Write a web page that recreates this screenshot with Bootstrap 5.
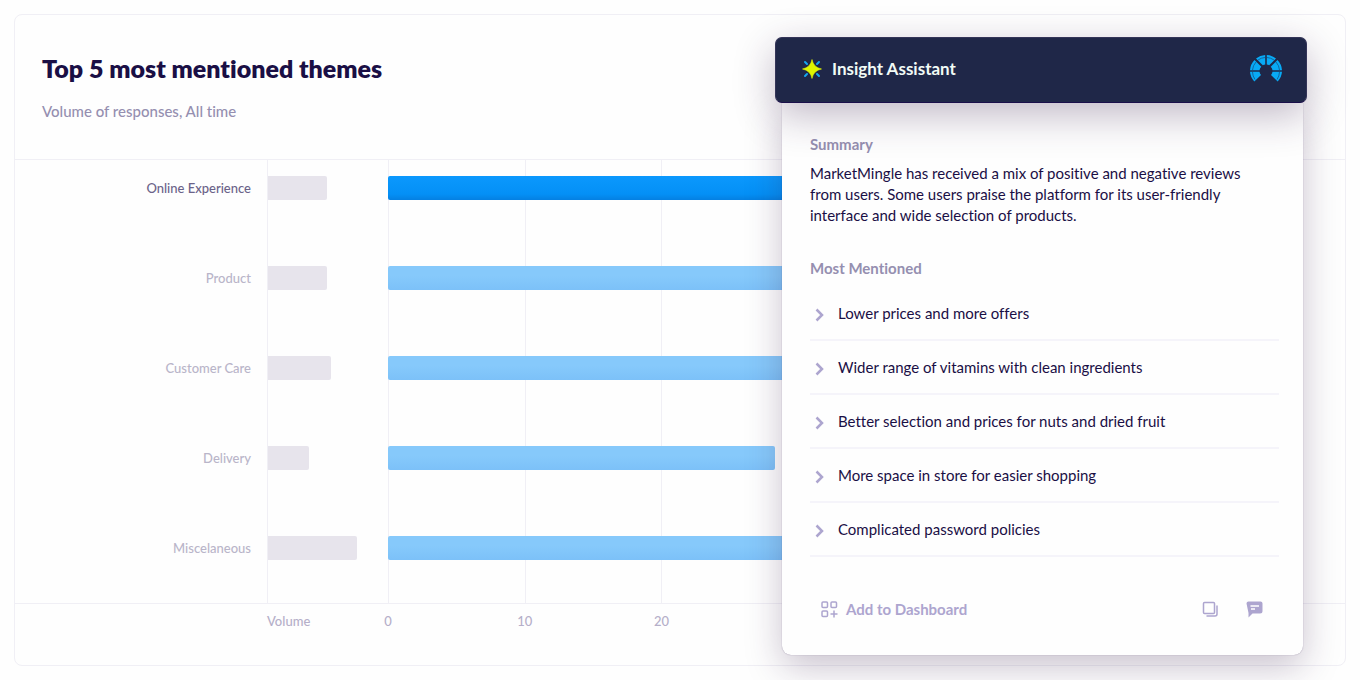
<!DOCTYPE html>
<html lang="en">
<head>
<meta charset="utf-8">
<meta name="viewport" content="width=device-width, initial-scale=1">
<title>Top 5 most mentioned themes</title>
<link href="https://cdn.jsdelivr.net/npm/bootstrap@5.3.0/dist/css/bootstrap.min.css" rel="stylesheet">
<style>
:root { --ink: #1a0f45; --muted-ink: #958fb0; --soft: #ada5cf; --rule: #f0eff5; }
body { font-family: Lato, "Liberation Sans", sans-serif; color: var(--ink); background: #fefefe; font-size: 15px; line-height: 21px; }
body, button { font-variant-ligatures: none; }
.board { padding: 14px; }
.theme-card { --bs-card-border-color: #f0eff5; --bs-card-border-radius: 8px; --bs-card-bg: #fefefe; --bs-card-color: var(--ink); }
.theme-head { padding: 36px 27px 37px; border-bottom: 1px solid var(--rule); }
.theme-head h1 { font-size: 25px; line-height: 34px; font-weight: 800; margin-bottom: 16px; }
.theme-head p { font-weight: 500; color: var(--muted-ink); }
.chart-row { display: grid; grid-template-columns: 252px 121px 1fr; height: 90px; }
.chart-row:last-child { height: 83px; }
.chart-row > div { padding-top: 16px; }
.name-cell { padding-right: 16px; text-align: right; font-size: 13px; line-height: 24px; font-weight: 500; color: #b9b5c9; }
.active-row .name-cell { color: #6b6389; }
.vol-cell { border-left: 1px solid var(--rule); }
.plot-cell { background: repeating-linear-gradient(90deg, #f0eff5 0 1px, transparent 1px calc(100% / 7)); }
.vol-bar, .count-bar { height: 24px; border-radius: 0 2px 2px 0; }
.vol-bar { background: #e7e4ec; }
.count-bar { background: linear-gradient(#86c9fb 40%, #7cc1f8); border-radius: 2px; }
.active-row .count-bar { background: linear-gradient(#0b98fd, #0490f6 75%, #0480e2); }
.axis { display: grid; grid-template-columns: 252px 121px repeat(7, 1fr); padding: 7px 0 33px; border-top: 1px solid var(--rule); font-size: 13px; font-weight: 500; color: #b5afc9; }
.axis .tick { transform: translateX(-50%); width: 30px; text-align: center; }
.assistant { position: absolute; top: 37px; right: 53px; width: 532px; }
.assistant-head { position: relative; height: 66px; gap: 9px; padding: 0 23px 2px 25px; border-radius: 7px; background: #1f2748; color: #f2fbf6; border: 1px solid #343458; border-bottom-color: #1a0f4a; box-shadow: 0 12px 40px rgba(50, 22, 70, .3); z-index: 1; }
.assistant-head h2 { font-size: 17px; line-height: 24px; font-weight: 700; }
.assistant-body { margin: 0 4px 0 7px; padding: 31px 24px 33px 28px; background: #fefefe; border-radius: 0 0 9px 9px; box-shadow: 0 0 1px rgba(50, 30, 80, .5), 0 12px 36px rgba(50, 22, 70, .26); }
.assistant-body h3 { font-size: 15px; line-height: 21px; font-weight: 700; color: var(--muted-ink); }
.assistant-body p { padding-right: 28px; }
.mention { min-height: 54px; padding: 0; border: 0; border-bottom: 2px solid #f5f4fa; background: none; color: var(--ink); text-align: left; }
.mention svg { margin: 3px 14px 0 5px; }
.assistant-tools { margin-top: 40px; padding: 0 16px 1px 11px; gap: 27px; }
.tool { padding: 0; border: 0; background: none; color: var(--soft); font-weight: 700; line-height: 24px; }
</style>
</head>
<body>
<main class="board position-relative">
  <section class="card theme-card">
    <header class="theme-head">
      <h1>Top 5 most mentioned themes</h1>
      <p class="mb-0">Volume of responses, All time</p>
    </header>
    <div>
      <div class="chart-row active-row"><div class="name-cell">Online Experience</div><div class="vol-cell"><div class="vol-bar" style="width:59px"></div></div><div class="plot-cell"><div class="count-bar" style="width:86%"></div></div></div>
      <div class="chart-row"><div class="name-cell">Product</div><div class="vol-cell"><div class="vol-bar" style="width:59px"></div></div><div class="plot-cell"><div class="count-bar" style="width:74%"></div></div></div>
      <div class="chart-row"><div class="name-cell">Customer Care</div><div class="vol-cell"><div class="vol-bar" style="width:63px"></div></div><div class="plot-cell"><div class="count-bar" style="width:62%"></div></div></div>
      <div class="chart-row"><div class="name-cell">Delivery</div><div class="vol-cell"><div class="vol-bar" style="width:41px"></div></div><div class="plot-cell"><div class="count-bar" style="width:40.4%"></div></div></div>
      <div class="chart-row"><div class="name-cell">Miscelaneous</div><div class="vol-cell"><div class="vol-bar" style="width:89px"></div></div><div class="plot-cell"><div class="count-bar" style="width:50%"></div></div></div>
    </div>
    <div class="axis">
      <span></span><span>Volume</span>
      <span class="tick">0</span><span class="tick">10</span><span class="tick">20</span>
    </div>
  </section>

  <aside class="assistant">
    <header class="assistant-head d-flex align-items-center">
      <svg width="22" height="22" viewBox="0 0 22 22" aria-hidden="true">
        <path d="M4 4l2 2M18 4l-2 2M4 18l2-2M18 18l-2-2" stroke="#16a6ef" stroke-width="2" stroke-linecap="round"/>
        <path d="M11 1.500Q12.500 9.500 20.500 11Q12.500 12.500 11 20.500Q9.500 12.500 1.500 11Q9.500 9.500 11 1.500Z" fill="#dff500" stroke="#dff500" stroke-width=".6" stroke-linejoin="round"/>
      </svg>
      <h2 class="mb-0">Insight Assistant</h2>
      <svg class="ms-auto" width="34" height="30" viewBox="0 0 34 30" aria-hidden="true">
        <g fill="#08aaf5">
          <path d="M16.200 1A16 16 0 0 0 7 4.500L13.800 11.300A6 6 0 0 1 16.200 10.500Z"/>
          <path d="M5.500 6A16 16 0 0 0 1 16.200H10.500A6 6 0 0 1 12.300 12.800Z"/>
          <path d="M1 17.800A16 16 0 0 0 5.300 27.500L12 21A6 6 0 0 1 10.500 17.800Z"/>
          <path d="M17.800 1A16 16 0 0 1 27 4.500L20.200 11.300A6 6 0 0 0 17.800 10.500Z"/>
          <path d="M28.500 6A16 16 0 0 1 33 16.200H23.500A6 6 0 0 0 21.700 12.800Z"/>
          <path d="M33 17.800A16 16 0 0 1 28.700 27.500L22 21A6 6 0 0 0 23.500 17.800Z"/>
        </g>
        <path d="M6 25.500A13.500 13.500 0 0 1 3.500 18M3.500 16A13.500 13.500 0 0 1 7 8M9 6A13.500 13.500 0 0 1 16 3.500M18 3.500A13.500 13.500 0 0 1 25 6M27 8A13.500 13.500 0 0 1 30.500 16M30.500 18A13.500 13.500 0 0 1 28 25.500" fill="none" stroke="#14558a" stroke-width=".8"/>
      </svg>
    </header>
    <div class="assistant-body">
      <h3 class="mb-2">Summary</h3>
      <p>MarketMingle has received a mix of positive and negative reviews from users. Some users praise the platform for its user-friendly interface and wide selection of products.</p>
      <h3 class="mt-4 pt-2">Most Mentioned</h3>
      <div class="d-flex flex-column">
        <button type="button" class="mention d-flex align-items-center"><svg width="9" height="14" viewBox="0 0 9 14" fill="none" stroke="#ada5cf" stroke-width="2.5"><path d="M1.500 1.500L7 7l-5.500 5.500"/></svg>Lower prices and more offers</button>
        <button type="button" class="mention d-flex align-items-center"><svg width="9" height="14" viewBox="0 0 9 14" fill="none" stroke="#ada5cf" stroke-width="2.5"><path d="M1.500 1.500L7 7l-5.500 5.500"/></svg>Wider range of vitamins with clean ingredients</button>
        <button type="button" class="mention d-flex align-items-center"><svg width="9" height="14" viewBox="0 0 9 14" fill="none" stroke="#ada5cf" stroke-width="2.5"><path d="M1.500 1.500L7 7l-5.500 5.500"/></svg>Better selection and prices for nuts and dried fruit</button>
        <button type="button" class="mention d-flex align-items-center"><svg width="9" height="14" viewBox="0 0 9 14" fill="none" stroke="#ada5cf" stroke-width="2.5"><path d="M1.500 1.500L7 7l-5.500 5.500"/></svg>More space in store for easier shopping</button>
        <button type="button" class="mention d-flex align-items-center"><svg width="9" height="14" viewBox="0 0 9 14" fill="none" stroke="#ada5cf" stroke-width="2.5"><path d="M1.500 1.500L7 7l-5.500 5.500"/></svg>Complicated password policies</button>
      </div>
      <footer class="assistant-tools d-flex align-items-center">
        <button type="button" class="tool d-flex align-items-center gap-2 me-auto">
          <svg width="17" height="17" viewBox="0 0 17 17" fill="none" stroke="currentColor" stroke-width="1.500"><rect x="1" y="1" width="5.500" height="5.500" rx="1"/><rect x="10" y="1" width="5.500" height="5.500" rx="1"/><rect x="1" y="10" width="5.500" height="5.500" rx="1"/><path d="M13 9.500v7M9.500 13h7"/></svg>
          Add to Dashboard
        </button>
        <button type="button" class="tool d-flex" aria-label="Copy"><svg width="17" height="17" viewBox="0 0 17 17" fill="none" stroke="currentColor" stroke-width="1.500"><rect x="1.500" y="1.500" width="11" height="11" rx="1"/><path d="M15 4.500V13a2 2 0 0 1-2 2H4.500"/></svg></button>
        <button type="button" class="tool d-flex" aria-label="Comment"><svg width="17" height="17" viewBox="0 0 17 17"><path d="M3 .5h11.500a2 2 0 0 1 2 2V10a2.500 2.500 0 0 1-2.500 2.500H6.500L2.500 16.500V12L.5 2.500a2 2 0 0 1 2-2Z" fill="currentColor"/><path d="M4.500 5h8.500M5 8h4" stroke="#fff" stroke-width="1.300"/></svg></button>
      </footer>
    </div>
  </aside>
</main>
<script src="https://cdn.jsdelivr.net/npm/bootstrap@5.3.0/dist/js/bootstrap.bundle.min.js"></script>
</body>
</html>
